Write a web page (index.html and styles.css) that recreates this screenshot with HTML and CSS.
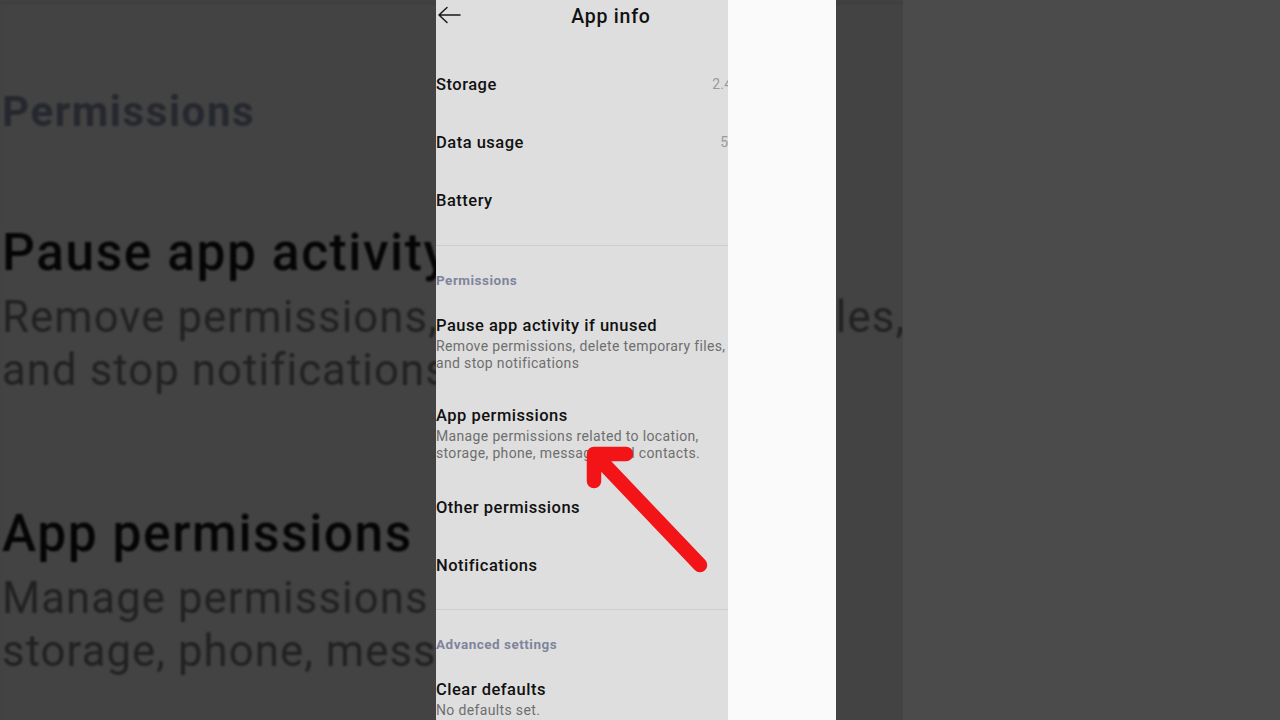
FILE: index.html
```html
<!DOCTYPE html>
<html lang="en">
<head>
<meta charset="utf-8">
<title>App info</title>
<link rel="stylesheet" href="styles.css">
</head>
<body>
<div class="stage">
  <div class="zoom-layer" aria-hidden="true">
    <div class="zoom-copy">
      <div class="content">
        <div class="appbar">
          <span class="back"></span>
          <span class="title">App info</span>
          <span></span>
        </div>
        <div class="top-group">
          <div class="row"><span>Storage</span><span class="value">2.42 MB</span></div>
          <div class="row"><span>Data usage</span><span class="value">5.3 MB</span></div>
          <div class="row"><span>Battery</span></div>
        </div>
        <div class="divider"></div>
        <div class="section">Permissions</div>
        <div class="item">
          <div class="item-title">Pause app activity if unused</div>
          <div class="item-sub">Remove permissions, delete temporary files,<br>and stop notifications</div>
        </div>
        <div class="item">
          <div class="item-title">App permissions</div>
          <div class="item-sub">Manage permissions related to location,<br>storage, phone, messages and contacts.</div>
        </div>
        <div class="row"><span>Other permissions</span></div>
        <div class="row"><span>Notifications</span></div>
        <div class="divider divider-2"></div>
        <div class="section">Advanced settings</div>
        <div class="item">
          <div class="item-title">Clear defaults</div>
          <div class="item-sub">No defaults set.</div>
        </div>
      </div>
    </div>
  </div>

  <div class="phone">
    <div class="content">
      <div class="appbar">
        <svg class="back" width="26" height="20" viewBox="0 0 26 20">
          <path d="M24 10 H3 M11 2.5 L3 10 L11 17.5" fill="none" stroke="#1a1a1a" stroke-width="1.5" stroke-linecap="round" stroke-linejoin="round"/>
        </svg>
        <span class="title">App info</span>
        <span></span>
      </div>
      <div class="top-group">
        <div class="row"><span>Storage</span><span class="value">2.42 MB</span></div>
        <div class="row"><span>Data usage</span><span class="value">5.3 MB</span></div>
        <div class="row"><span>Battery</span></div>
      </div>
      <div class="divider"></div>
      <div class="section">Permissions</div>
      <div class="item">
        <div class="item-title">Pause app activity if unused</div>
        <div class="item-sub">Remove permissions, delete temporary files,<br>and stop notifications</div>
      </div>
      <div class="item">
        <div class="item-title">App permissions</div>
        <div class="item-sub">Manage permissions related to location,<br>storage, phone, messages and contacts.</div>
      </div>
      <div class="row"><span>Other permissions</span></div>
      <div class="row"><span>Notifications</span></div>
      <div class="divider divider-2"></div>
      <div class="section">Advanced settings</div>
      <div class="item">
        <div class="item-title">Clear defaults</div>
        <div class="item-sub">No defaults set.</div>
      </div>
    </div>
    <svg class="pointer" width="292" height="720" viewBox="436 0 292 720">
      <path d="M700 565 L601 461 M594 481 L594 454 L626 454" fill="none" stroke="#f21417" stroke-width="14.5" stroke-linecap="round" stroke-linejoin="round"/>
    </svg>
  </div>

  <div class="white-panel"></div>
</div>
</body>
</html>
```

FILE: styles.css
```css
* { box-sizing: border-box; }

html, body {
  margin: 0;
  padding: 0;
  background: #4b4b4b;
  font-family: Roboto, "Noto Sans", "Liberation Sans", sans-serif;
}

.stage {
  display: grid;
  grid-template-columns: 436px 292px 108px 67px 1fr;
  grid-template-rows: 720px;
  height: 720px;
  overflow: hidden;
}

/* zoomed, darkened copy of the screen behind everything */
.zoom-layer {
  grid-column: 1 / 5;
  grid-row: 1;
  position: relative;
  z-index: 0;
  overflow: hidden;
  background: #424242;
}

.zoom-copy {
  width: 350px;
  transform-origin: 0 0;
  transform: translate(2px, -763px) scale(3.12);
  filter: brightness(0.3) blur(0.35px);
}

.phone {
  grid-column: 2;
  grid-row: 1;
  position: relative;
  z-index: 1;
  overflow: hidden;
  background: #dedede;
}

.white-panel {
  grid-column: 3;
  grid-row: 1;
  position: relative;
  z-index: 1;
  background: #fafafa;
}

.content {
  width: 350px;
  background: #dedede;
  color: #111111;
}

.appbar {
  height: 32px;
  display: grid;
  grid-template-columns: 1fr auto 1fr;
  align-items: center;
}

.appbar .back {
  justify-self: start;
  margin-left: 0;
  margin-top: -2px;
}

.appbar .title {
  font-size: 19.5px;
  font-weight: 500;
  letter-spacing: 0.75px;
  color: #111111;
}

.top-group {
  margin-top: 23px;
}

.row {
  height: 58px;
  display: flex;
  align-items: center;
  justify-content: space-between;
  padding-right: 20px;
  font-size: 16.5px;
  font-weight: 500;
  letter-spacing: 0.5px;
}

.value {
  font-size: 14px;
  font-weight: 400;
  letter-spacing: 0.3px;
  color: #9a9a9a;
}

.divider {
  height: 1px;
  background: #cdcdcd;
  margin-top: 16px;
}

.divider-2 {
  margin-top: 15px;
}

.section {
  padding: 26px 0 9px;
  font-size: 13.5px;
  line-height: 17px;
  font-weight: 700;
  letter-spacing: 0.5px;
  color: #7e849c;
}

.item {
  padding: 18px 0 16px;
}

.item-title {
  font-size: 16.5px;
  line-height: 20px;
  font-weight: 500;
  letter-spacing: 0.5px;
}

.item-sub {
  margin-top: 2px;
  font-size: 14px;
  line-height: 17px;
  letter-spacing: 0.35px;
  color: #6e6e6e;
}

.pointer {
  position: absolute;
  left: 0;
  top: 0;
}
```
